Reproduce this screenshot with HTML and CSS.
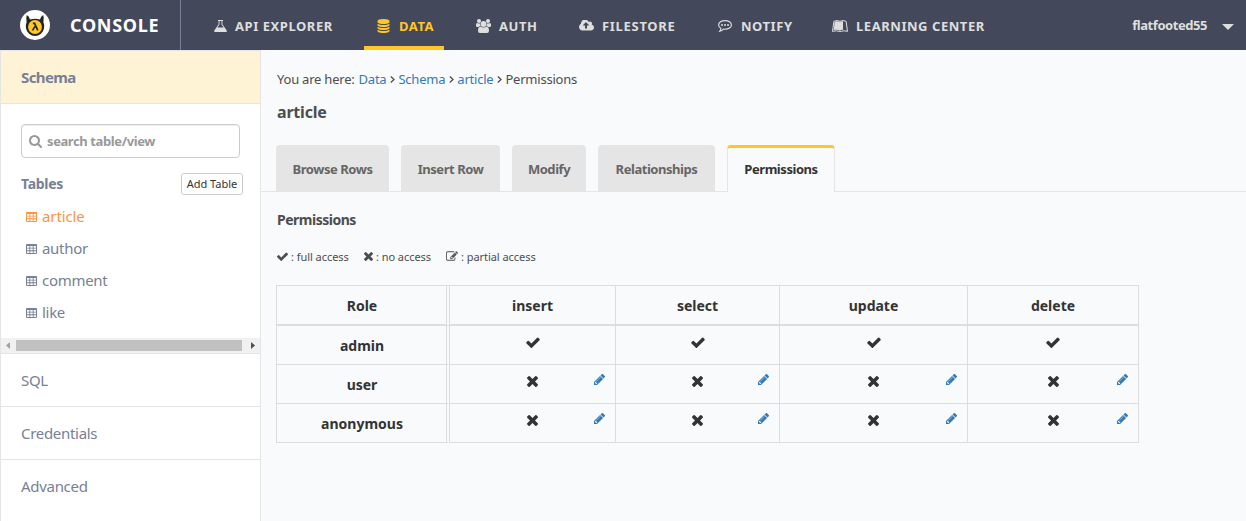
FILE: index.html
```html
<!DOCTYPE html>
<html lang="en">
<head>
<meta charset="utf-8">
<title>Console - article permissions</title>
<link rel="stylesheet" href="styles.css">
</head>
<body>
<svg class="sprite" aria-hidden="true">
  <symbol id="check" viewBox="121 264 1550 1258"><path d="M1671 566q0 40-28 68l-724 724-136 136q-28 28-68 28t-68-28l-136-136-362-362q-28-28-28-68t28-68l136-136q28-28 68-28t68 28l294 295 656-657q28-28 68-28t68 28l136 136q28 28 28 68z"/></symbol>
  <symbol id="times" viewBox="302 366 1188 1188"><path d="M1490 1322q0 40-28 68l-136 136q-28 28-68 28t-68-28l-294-294-294 294q-28 28-68 28t-68-28l-136-136q-28-28-28-68t28-68l294-294-294-294q-28-28-28-68t28-68l136-136q28-28 68-28t68 28l294 294 294-294q28-28 68-28t68 28l136 136q28 28 28 68t-28 68l-294 294 294 294q28 28 28 68z"/></symbol>
  <symbol id="pencil" viewBox="128 149 1515 1515"><path d="M491 1536l91-91-235-235-91 91v107h128v128h107zm523-928q0-22-22-22-10 0-17 7l-542 542q-7 7-7 17 0 22 22 22 10 0 17-7l542-542q7-7 7-17zm-54-192l416 416-832 832h-416v-416zm683 96q0 53-37 90l-166 166-416-416 166-165q36-38 90-38 53 0 91 38l235 234q37 39 37 91z"/></symbol>
  <symbol id="edit" viewBox="0 128 1792 1408"><path d="M888 1184l116-116-152-152-116 116v56h96v96h56zm440-720q-16-16-33 1l-350 350q-17 17-1 33t33-1l350-350q17-17 1-33zm80 594v190q0 119-84.5 203.5t-203.5 84.5h-832q-119 0-203.5-84.5t-84.5-203.5v-832q0-119 84.5-203.5t203.5-84.5h832q63 0 117 25 15 7 18 23 3 17-9 29l-49 49q-14 14-32 8-23-6-45-6h-832q-66 0-113 47t-47 113v832q0 66 47 113t113 47h832q66 0 113-47t47-113v-126q0-13 9-22l64-64q15-15 35-7t20 29zm-96-738l288 288-672 672h-288v-288zm444 132l-92 92-288-288 92-92q28-28 68-28t68 28l152 152q28 28 28 68t-28 68z"/></symbol>
  <symbol id="grid" viewBox="0 0 11 10"><path fill-rule="evenodd" d="M1 0h9a1 1 0 0 1 1 1v8a1 1 0 0 1-1 1H1a1 1 0 0 1-1-1V1a1 1 0 0 1 1-1zM1 2v1.7h2.4V2zM4.3 2v1.7h2.4V2zM7.6 2v1.7H10V2zM1 4.6v1.7h2.4V4.6zM4.3 4.6v1.7h2.4V4.6zM7.6 4.6v1.7H10V4.6zM1 7.2v1.8h2.4V7.2zM4.3 7.2v1.8h2.4V7.2zM7.6 7.2v1.8H10V7.2z"/></symbol>
  <symbol id="search" viewBox="64 128 1664 1664"><path d="M1216 832q0-185-131.5-316.5t-316.5-131.5-316.5 131.5-131.5 316.5 131.5 316.5 316.5 131.5 316.5-131.5 131.5-316.5zm512 832q0 52-38 90t-90 38q-54 0-90-38l-343-342q-179 124-399 124-143 0-273.5-55.5t-225-150-150-225-55.5-273.5 55.5-273.5 150-225 225-150 273.5-55.5 273.5 55.5 225 150 150 225 55.5 273.5q0 220-124 399l343 343q37 37 37 90z"/></symbol>
  <symbol id="database" viewBox="128 0 1536 1792"><path d="M896 768q237 0 443-43t325-127v170q0 69-103 128t-280 93.5-385 34.5-385-34.5-280-93.5-103-128v-170q119 84 325 127t443 43zm0 768q237 0 443-43t325-127v170q0 69-103 128t-280 93.5-385 34.5-385-34.5-280-93.5-103-128v-170q119 84 325 127t443 43zm0-384q237 0 443-43t325-127v170q0 69-103 128t-280 93.5-385 34.5-385-34.5-280-93.5-103-128v-170q119 84 325 127t443 43zm0-1152q208 0 385 34.5t280 93.5 103 128v128q0 69-103 128t-280 93.5-385 34.5-385-34.5-280-93.5-103-128v-128q0-69 103-128t280-93.5 385-34.5z"/></symbol>
  <symbol id="cloud" viewBox="-64 256 1920 1280"><path d="M1216 864q0-14-9-23l-352-352q-9-9-23-9t-23 9l-351 351q-10 12-10 24 0 14 9 23t23 9h224v352q0 13 9.5 22.5t22.5 9.5h192q13 0 22.5-9.5t9.5-22.5v-352h224q13 0 22.5-9.5t9.5-22.5zm640 288q0 159-112.5 271.5t-271.5 112.5h-1088q-185 0-316.5-131.5t-131.5-316.5q0-130 70-240t188-165q-2-30-2-43 0-212 150-362t362-150q156 0 285.5 87t188.5 231q71-62 166-62 106 0 181 75t75 181q0 76-41 138 130 31 213.5 135.5t83.5 238.5z"/></symbol>
  <symbol id="flask" viewBox="0 0 13 12"><path fill-rule="evenodd" d="M4 0h5v.9h-.6v3.3l4.300 6.200q.8 1.600-.9 1.600H1.200Q-.5 12 .3 10.400L4.600 4.200V.9H4zM5.500.9v3.600L3.400 7.500h6.200L7.500 4.500V.9z"/></symbol>
  <symbol id="users" viewBox="0 0 15 14"><circle cx="3" cy="2" r="2"/><circle cx="12" cy="2" r="2"/><path d="M0 5.500Q0 3.900 1.300 4q1.700 1 2.800.3Q3.900 6 4.700 7 3.500 7 2.700 8H1.300Q0 8 0 6.800zM15 5.500Q15 3.900 13.700 4q-1.700 1-2.800.3.200 1.700-.6 2.700 1.200 0 2 1h1.400q1.300 0 1.300-1.200z"/><circle cx="7.500" cy="5" r="2.900"/><path d="M4.500 7.500q3 2 6 0 2.500.4 2.500 4.300 0 2.200-2 2.200H4q-2 0-2-2.200 0-3.900 2.500-4.300z"/></symbol>
  <symbol id="comment" viewBox="0 0 14 12"><path d="M7 .6c3.500 0 6.400 1.900 6.400 4.300S10.500 9.200 7 9.200q-.8 0-1.500-.1Q4 10.800 1.800 11.200q1-1.200 1.100-2.900C1.400 7.500.6 6.300.6 4.900.6 2.500 3.500.6 7 .6z" fill="none" stroke="currentColor" stroke-width="1.150"/><circle cx="4" cy="5" r="1"/><circle cx="7" cy="5" r="1"/><circle cx="10" cy="5" r="1"/></symbol>
  <symbol id="book" viewBox="0 0 16 12"><path d="M.5 11.400 1.900 1.300Q5.700-.4 8 1.400q2.300-1.800 6.100-.1l1.400 10.100q-4.300-1.300-6.200 0-1.300.8-2.600 0-1.900-1.300-6.200 0z" fill="none" stroke="currentColor" stroke-width="1"/><path d="M2.700 1.800Q6 .6 8 2.200 9.400 1 11 1.300v8.500q-2-.2-3 1-2.300-1.400-6.300-.7z"/></symbol>
</svg>

<header class="topbar">
  <div class="brand">
    <svg class="logo" viewBox="0 0 30 30"><circle cx="15" cy="15" r="15" fill="#fff"/><path d="M6.800 5q2.500 1 3.200 4.500Q15 7.800 20 9.500 20.700 6 23.200 5q1.100 3.300.2 7.200Q24.800 15 24 18.200A9.100 9.100 0 0 1 6 18.200Q5.200 15 6.600 12.200 5.700 8.300 6.800 5z" fill="#242424"/><circle cx="15" cy="17" r="6.900" fill="#ffc627"/><path d="M12.900 13.400h1.700l3.200 7M15.100 16.400l-2.600 4" fill="none" stroke="#242424" stroke-width="1.700"/></svg>
    <span class="brand-name">CONSOLE</span>
  </div>
  <nav class="nav">
    <a class="nav-item api"><svg class="i-flask"><use href="#flask"/></svg><span>API EXPLORER</span></a>
    <a class="nav-item data active"><svg class="i-db"><use href="#database"/></svg><span>DATA</span></a>
    <a class="nav-item auth"><svg class="i-users"><use href="#users"/></svg><span>AUTH</span></a>
    <a class="nav-item files"><svg class="i-cloud"><use href="#cloud"/></svg><span>FILESTORE</span></a>
    <a class="nav-item notify"><svg class="i-comment"><use href="#comment"/></svg><span>NOTIFY</span></a>
    <a class="nav-item learn"><svg class="i-book"><use href="#book"/></svg><span>LEARNING CENTER</span></a>
  </nav>
  <div class="user"><span class="user-name">flatfooted55</span><svg class="caret" viewBox="0 0 12 6"><path d="M0 0h12L6 6z"/></svg></div>
</header>

<div class="layout">
  <aside class="sidebar">
    <div class="schema">Schema</div>
    <div class="browser">
      <div class="search"><svg class="i-search"><use href="#search"/></svg><span>search table/view</span></div>
      <div class="tables-head"><span class="tables-title">Tables</span><button class="add">Add Table</button></div>
      <ul class="tables">
        <li class="current"><svg><use href="#grid"/></svg><span>article</span></li>
        <li><svg><use href="#grid"/></svg><span>author</span></li>
        <li><svg><use href="#grid"/></svg><span>comment</span></li>
        <li><svg><use href="#grid"/></svg><span>like</span></li>
      </ul>
      <div class="scrollbar">
        <svg class="arrow dim" viewBox="0 0 4 7"><path d="M4 0v7L0 3.500z"/></svg>
        <div class="thumb"></div>
        <svg class="arrow" viewBox="0 0 4 7"><path d="M0 0v7l4-3.500z"/></svg>
      </div>
    </div>
    <div class="side-link">SQL</div>
    <div class="side-link">Credentials</div>
    <div class="side-link">Advanced</div>
  </aside>

  <main class="content">
    <div class="crumbs"><span>You are here:</span><a>Data</a><svg viewBox="0 0 5 7"><path d="M.8.500 4 3.500.8 6.500"/></svg><a>Schema</a><svg viewBox="0 0 5 7"><path d="M.8.500 4 3.500.8 6.500"/></svg><a>article</a><svg viewBox="0 0 5 7"><path d="M.8.500 4 3.500.8 6.500"/></svg><span>Permissions</span></div>
    <h2 class="title">article</h2>
    <div class="tabs">
      <div class="tab w1">Browse Rows</div>
      <div class="tab w2">Insert Row</div>
      <div class="tab w3">Modify</div>
      <div class="tab w4">Relationships</div>
      <div class="tab w5 selected">Permissions</div>
    </div>
    <h4 class="subtitle">Permissions</h4>
    <div class="legend">
      <span class="l1"><svg class="k-check"><use href="#check"/></svg>: full access</span>
      <span class="l2"><svg class="k-times"><use href="#times"/></svg>: no access</span>
      <span class="l3"><svg class="k-edit"><use href="#edit"/></svg>: partial access</span>
    </div>
    <div class="matrix">
      <div class="cell head role">Role</div><div class="cell head">insert</div><div class="cell head">select</div><div class="cell head">update</div><div class="cell head">delete</div>
      <div class="cell role">admin</div>
      <div class="cell mark"><svg class="yes"><use href="#check"/></svg></div>
      <div class="cell mark"><svg class="yes"><use href="#check"/></svg></div>
      <div class="cell mark"><svg class="yes"><use href="#check"/></svg></div>
      <div class="cell mark"><svg class="yes"><use href="#check"/></svg></div>
      <div class="cell role">user</div>
      <div class="cell mark"><svg class="no"><use href="#times"/></svg><svg class="pen"><use href="#pencil"/></svg></div>
      <div class="cell mark"><svg class="no"><use href="#times"/></svg><svg class="pen"><use href="#pencil"/></svg></div>
      <div class="cell mark"><svg class="no"><use href="#times"/></svg><svg class="pen"><use href="#pencil"/></svg></div>
      <div class="cell mark"><svg class="no"><use href="#times"/></svg><svg class="pen"><use href="#pencil"/></svg></div>
      <div class="cell role">anonymous</div>
      <div class="cell mark"><svg class="no"><use href="#times"/></svg><svg class="pen"><use href="#pencil"/></svg></div>
      <div class="cell mark"><svg class="no"><use href="#times"/></svg><svg class="pen"><use href="#pencil"/></svg></div>
      <div class="cell mark"><svg class="no"><use href="#times"/></svg><svg class="pen"><use href="#pencil"/></svg></div>
      <div class="cell mark"><svg class="no"><use href="#times"/></svg><svg class="pen"><use href="#pencil"/></svg></div>
    </div>
  </main>
</div>
</body>
</html>
```
FILE: styles.css
```css
* { box-sizing: border-box; }
body { margin: 0; width: 1246px; height: 521px; overflow: hidden; background: #f8fafc; font-family: "Noto Sans", "Open Sans", sans-serif; font-size: 14px; color: #4d4d4d; white-space: nowrap; }
svg { display: block; flex: none; fill: currentColor; }
.sprite { display: none; }

.topbar { display: flex; height: 50px; background: #43495a; color: #dedede; font-weight: 700; }
.brand { display: flex; align-items: center; width: 181px; padding-left: 20px; gap: 20px; border-right: 1px solid #788095; }
.logo { width: 30px; height: 30px; }
.brand-name { color: #fff; font-size: 18px; letter-spacing: .7px; }
.nav { display: flex; flex: 1; padding-left: 20px; }
.nav-item { display: flex; align-items: center; padding: 5px 0 0 13px; border-bottom: 4px solid transparent; font-size: 13px; letter-spacing: .55px; }
.nav-item.active { color: #ffc627; border-color: #ffc627; }
.api { width: 163px; gap: 8px; }
.data { width: 80px; gap: 9px; }
.auth { width: 122px; padding-left: 32px; gap: 8px; }
.files { width: 139px; gap: 8px; letter-spacing: .7px; }
.notify { width: 114px; gap: 9px; }
.learn { gap: 8px; }
.i-flask { width: 13px; height: 12px; }
.i-db { width: 13px; height: 14px; }
.i-users { width: 15px; height: 14px; }
.i-cloud { width: 15px; height: 11px; }
.i-comment { width: 14px; height: 12px; }
.i-book { width: 16px; height: 12px; }
.user { display: flex; align-items: center; gap: 15px; padding-right: 12px; }
.user-name { font-size: 13px; letter-spacing: -.45px; }
.caret { width: 12px; height: 6px; margin-top: 3px; }

.layout { display: flex; }
.sidebar { width: 261px; height: 471px; background: #fff; border: 1px solid #e5e5e5; border-bottom: 0; color: #788095; }
.schema { height: 53px; padding-left: 20px; line-height: 53px; background: #fff3d5; border-bottom: 1px solid #e5e5e5; font-size: 15px; font-weight: 700; letter-spacing: -.6px; }
.browser { height: 250px; padding-top: 20px; border-bottom: 1px solid #e5e5e5; }
.search { display: flex; align-items: center; gap: 5px; width: 219px; height: 34px; margin-left: 20px; padding-left: 7px; border: 1px solid #ccc; border-radius: 4px; box-shadow: inset 0 1px 1px rgba(0,0,0,.075); color: #999; font-weight: 700; font-size: 13px; letter-spacing: -.4px; }
.i-search { width: 13px; height: 13px; }
.tables-head { display: flex; justify-content: space-between; align-items: center; width: 222px; height: 22px; margin: 15px 0 0 20px; }
.tables-title { padding-bottom: 2px; font-size: 14px; font-weight: 700; letter-spacing: -.3px; }
.add { width: 62px; height: 22px; padding: 0 0 2px; border: 1px solid #ccc; border-radius: 3px; background: #fff; color: #333; font: 11px "Noto Sans", sans-serif; }
.tables { margin: 5px 0 0; padding: 0 0 0 25px; list-style: none; }
.tables li { display: flex; align-items: center; gap: 5px; height: 32px; font-size: 15px; letter-spacing: -.3px; }
.tables svg { width: 11px; height: 10px; margin-top: 2px; }
.tables .current { color: #fd9540; letter-spacing: -.1px; }
.scrollbar { display: flex; align-items: center; height: 15px; margin-top: 10px; padding: 0 5px; background: #f1f1f1; }
.arrow { width: 4px; height: 7px; color: #505050; }
.dim { color: #a3a3a3; }
.thumb { width: 226px; height: 11px; margin: 0 9px 0 6px; background: #c1c1c1; }
.side-link { height: 53px; padding-left: 20px; border-bottom: 1px solid #e5e5e5; line-height: 53px; font-size: 15px; letter-spacing: -.3px; }
.side-link:last-child { border-bottom: 0; }

.content { flex: 1; padding-top: 18px; }
.crumbs { display: flex; align-items: center; gap: 4px; height: 22px; padding-left: 16px; font-size: 13px; letter-spacing: -.22px; }
.crumbs a { color: #337ab7; }
.crumbs svg { width: 5px; height: 7px; margin: 0 -.5px; fill: none; stroke: #4d4d4d; stroke-width: 1.300; }
.title { height: 24px; margin: 10px 0 0 16px; line-height: 24px; font-size: 16px; letter-spacing: -.2px; }
.tabs { display: flex; gap: 12px; height: 47px; margin-top: 21px; padding-left: 15px; border-bottom: 1px solid #e5e5e5; }
.tab { height: 46px; line-height: 48px; border-radius: 4px 4px 0 0; background: #e5e5e5; color: #666; text-align: center; font-weight: 700; font-size: 13px; letter-spacing: -.45px; }
.selected { height: 47px; line-height: 42px; border: 1px solid #e5e5e5; border-top: 3px solid #ffc627; border-bottom: 0; background: #f8fafc; color: #333; }
.w1 { width: 113px; } .w2 { width: 99px; } .w3 { width: 74px; } .w4 { width: 117px; } .w5 { width: 108px; }
.subtitle { margin: 18px 0 0 16px; height: 20px; line-height: 20px; font-size: 14px; letter-spacing: -.5px; }
.legend { display: flex; height: 18px; margin: 17px 0 0 16px; font-size: 11px; letter-spacing: -.05px; }
.legend span { display: flex; align-items: center; gap: 3px; }
.l1 { width: 87px; } .l2 { width: 82px; }
.k-check { width: 11px; height: 9px; } .k-times { width: 9px; height: 9px; } .k-edit { width: 12px; height: 10px; }
.matrix { display: grid; grid-template-columns: 173px 166px 164px 188px 171px; grid-template-rows: 40px 39px 39px 39px; width: 863px; margin: 20px 0 0 15px; border: solid #ddd; border-width: 1px 0 0 1px; color: #333; }
.cell { border: solid #ddd; border-width: 0 1px 1px 0; text-align: center; font-size: 14px; font-weight: 700; line-height: 39px; }
.head { border-bottom-width: 2px; }
.role { padding-left: 1px; border-right: 4px double #ddd; }
.mark { display: grid; grid-template-columns: 1fr auto 1fr; padding: 9px 10px 0; align-items: start; }
.mark svg { grid-row: 1; }
.mark .yes { grid-column: 2; width: 14px; height: 11px; margin-top: 2px; }
.mark .no { grid-column: 2; width: 11px; height: 11px; margin-top: 2px; }
.mark .pen { grid-column: 3; justify-self: end; width: 11px; height: 11px; color: #337ab7; }
```
